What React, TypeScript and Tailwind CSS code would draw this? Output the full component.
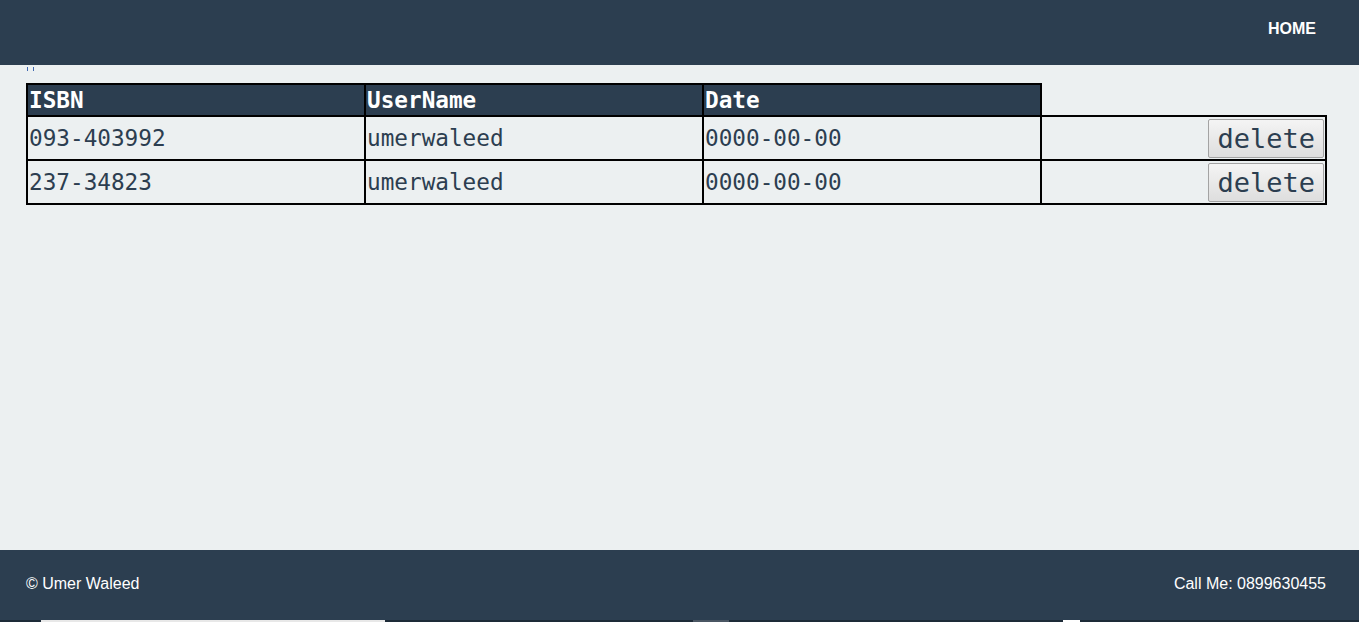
import React from "react";

const rows = [
  { isbn: "093-403992", user: "umerwaleed", date: "0000-00-00" },
  { isbn: "237-34823", user: "umerwaleed", date: "0000-00-00" },
];

export default function App() {
  const mono = { fontFamily: '"DejaVu Sans Mono", monospace' };
  return (
    <div className="flex h-[622px] w-full flex-col bg-[#ecf0f1]" style={{ fontFamily: '"Liberation Sans", Arial, sans-serif' }}>
      <header className="flex h-[65px] shrink-0 items-start justify-end bg-[#2c3e50] pr-[43px] pt-[17px]">
        <span className="text-[16px] font-bold text-white">HOME</span>
      </header>
      <main className="flex-1 px-[26px]">
        <div className="flex h-[18px] gap-[5px] pl-[1px] pt-[2px]">
          <span className="h-[4px] w-[1px] bg-[#3f67b0]" />
          <span className="h-[4px] w-[1px] bg-[#3f67b0]" />
        </div>
        <table className="border-collapse text-[#2c3e50]" style={mono}>
          <colgroup>
            <col className="w-[338px]" />
            <col className="w-[338px]" />
            <col className="w-[338px]" />
            <col className="w-[285px]" />
          </colgroup>
          <thead>
            <tr className="h-[32px]">
              <th className="border-2 border-black bg-[#2c3e50] p-0 pl-[1px] text-left align-middle text-[22.7px] font-bold leading-[26px] text-white">ISBN</th>
              <th className="border-2 border-black bg-[#2c3e50] p-0 pl-[1px] text-left align-middle text-[22.7px] font-bold leading-[26px] text-white">UserName</th>
              <th className="border-2 border-black bg-[#2c3e50] p-0 pl-[1px] text-left align-middle text-[22.7px] font-bold leading-[26px] text-white">Date</th>
              <th className="p-0"></th>
            </tr>
          </thead>
          <tbody>
            {rows.map((r) => (
              <tr key={r.isbn} className="h-[44px]">
                <td className="border-2 border-black p-0 pl-[1px] text-[22.7px]">{r.isbn}</td>
                <td className="border-2 border-black p-0 pl-[1px] text-[22.7px]">{r.user}</td>
                <td className="border-2 border-black p-0 pl-[1px] text-[22.7px]">{r.date}</td>
                <td className="border-2 border-black p-0 pr-[1px] text-right">
                  <button
                    className="inline-flex h-[39px] items-center justify-center rounded-[2px] border border-[#a3a3a3] bg-gradient-to-b from-[#f4f4f4] to-[#dedede] px-[8px] text-[27px] leading-none text-[#2c3e50]"
                    style={mono}
                  >
                    delete
                  </button>
                </td>
              </tr>
            ))}
          </tbody>
        </table>
      </main>
      <footer className="flex h-[70px] shrink-0 items-center justify-between bg-[#2c3e50] px-[26px] pb-[2px] pt-0 text-[16px] text-white">
        <span>© Umer Waleed</span>
        <span className="mr-[7px]">Call Me: 0899630455</span>
      </footer>
      <div className="flex h-[2px] shrink-0 bg-[#1d2b38]">
        <div className="w-[41px]" />
        <div className="w-[344px] bg-[#e8e8e8]" />
        <div className="w-[308px]" />
        <div className="w-[36px] bg-[#4a5663]" />
        <div className="w-[334px]" />
        <div className="w-[17px] bg-white" />
      </div>
    </div>
  );
}
